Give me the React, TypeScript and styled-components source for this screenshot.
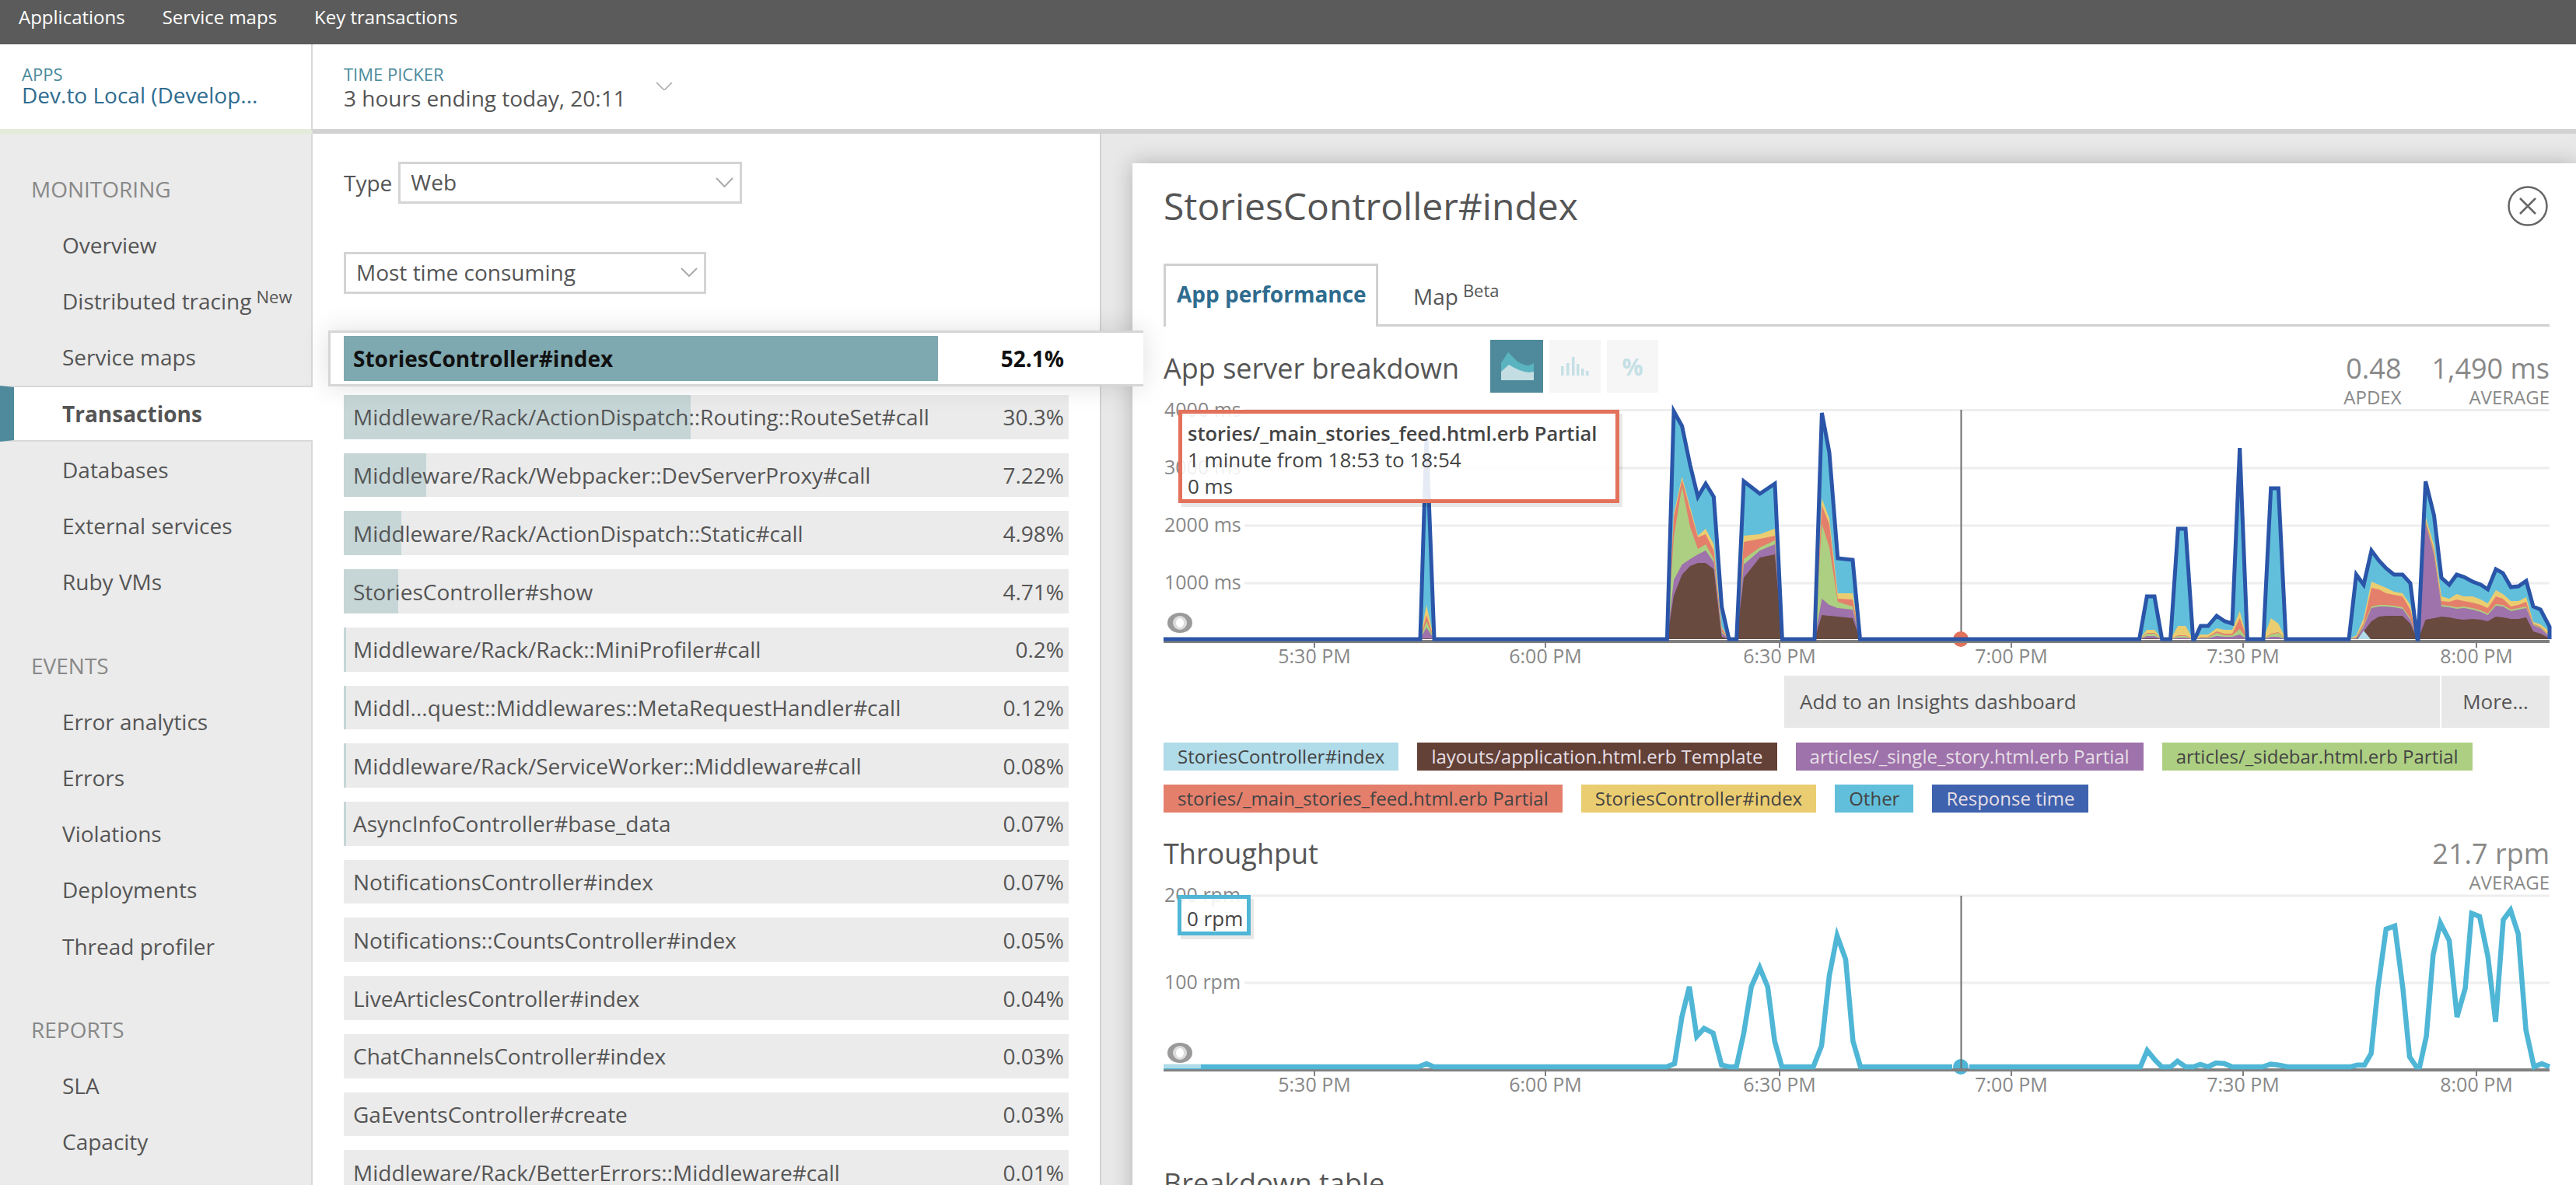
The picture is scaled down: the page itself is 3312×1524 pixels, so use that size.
import React from "react";
import styled, { createGlobalStyle } from "styled-components";

const GlobalStyle = createGlobalStyle`
  html, body {
    margin: 0;
    width: 3312px;
    height: 1524px;
    overflow: hidden;
    background: #fff;
    font-family: "Open Sans", "Liberation Sans", sans-serif;
    color: #555;
  }
  * {
    box-sizing: border-box;
  }
`;

const Page = styled.div`
  width: 3312px;
  height: 1524px;
  display: flex;
  flex-direction: column;
  overflow: hidden;
`;

const TopBar = styled.div`
  height: 57px;
  flex: none;
  background: #5b5b5b;
  display: flex;
  gap: 48px;
  padding: 0 24px;
  font-size: 24px;
  line-height: 44px;
  color: #fff;
`;

const Header = styled.div`
  height: 115px;
  flex: none;
  display: flex;
  border-bottom: 6px solid #d2d2d2;
`;

const AppCell = styled.div`
  width: 402px;
  height: 115px;
  flex: none;
  padding: 24px 0 0 28px;
  border-right: 2px solid #d8d8d8;
  border-bottom: 6px solid #e3ecd9;
`;

const PickerCell = styled.div`
  padding: 24px 0 0 40px;
  display: flex;
  align-items: flex-start;
`;

const SmallLabel = styled.div`
  font-size: 22px;
  line-height: 28px;
  color: #4a8a9b;
`;

const AppName = styled.div`
  font-size: 28px;
  line-height: 34px;
  margin-top: -4px;
  color: #2f6c8f;
`;

const PickerValue = styled.div`
  font-size: 28px;
  line-height: 36px;
  margin-top: -1px;
  color: #555;
`;

const PickerChevron = styled.svg`
  margin: 25px 0 0 38px;
`;

const Body = styled.div`
  flex: 1;
  display: flex;
  min-height: 0;
`;

const Sidebar = styled.nav`
  width: 402px;
  flex: none;
  padding-top: 35px;
  background: #ebebeb;
  border-right: 2px solid #d8d8d8;
`;

const NavGroup = styled.div`
  margin-bottom: 35.5px;
`;

const NavHeading = styled.div`
  height: 72px;
  padding-left: 40px;
  font-size: 28px;
  line-height: 72px;
  color: #888;
`;

const NavItem = styled.div<{ $active?: boolean }>`
  height: 72.2px;
  padding-left: 80px;
  font-size: 28px;
  line-height: 72px;
  color: #555;
  sup {
    font-size: 22px;
    line-height: 0;
    vertical-align: 8px;
    margin-left: 6px;
  }
  ${(p) =>
    p.$active &&
    `
    position: relative;
    margin-right: -2px;
    background: #fff;
    border-top: 2px solid #d8d8d8;
    border-bottom: 2px solid #d8d8d8;
    border-left: 18px solid #4e8a9b;
    padding-left: 62px;
    line-height: 68px;
    font-weight: 700;
  `}
`;

const ListColumn = styled.div`
  width: 1014px;
  flex: none;
  padding: 36px 0 0 40px;
  border-right: 2px solid #d2d2d2;
  background: #fff;
  position: relative;
  z-index: 2;
`;

const TypeRow = styled.div`
  display: flex;
  align-items: center;
  gap: 8px;
  font-size: 28px;
  margin-bottom: 62px;
`;

const Select = styled.div<{ $w: number }>`
  width: ${(p) => p.$w}px;
  height: 54px;
  display: flex;
  align-items: center;
  justify-content: space-between;
  padding: 0 8px 2px 13px;
  border: 3px solid #d4d4d4;
  font-size: 28px;
  color: #555;
  background: #fff;
`;

const SelectedWrap = styled.div`
  margin: 47px -56px 11px -20px;
  height: 72px;
  padding: 4px 0 4px 17px;
  display: flex;
  background: #fff;
  border: 3px solid #d6d6d6;
  border-right: none;
  box-shadow: 0 0 34px rgba(0, 0, 0, 0.13);
  position: relative;
  z-index: 3;
`;

const RowList = styled.div`
  width: 932px;
  display: flex;
  flex-direction: column;
  gap: 18px;
`;

const Row = styled.div<{ $fill: number; $selected?: boolean }>`
  width: 932px;
  height: ${(p) => (p.$selected ? 58 : 56.72)}px;
  flex: none;
  display: flex;
  align-items: center;
  justify-content: space-between;
  padding: 0 6px 0 12px;
  font-size: 28px;
  font-weight: ${(p) => (p.$selected ? 700 : 400)};
  color: ${(p) => (p.$selected ? "#111" : "#555")};
  white-space: nowrap;
  background: ${(p) =>
    p.$selected
      ? `linear-gradient(to right, #7fa9b0 ${p.$fill}px, #fff ${p.$fill}px)`
      : `linear-gradient(to right, #c6d6d7 ${p.$fill}px, #ebebeb ${p.$fill}px)`};
`;

const PanelArea = styled.div`
  flex: 1;
  min-width: 0;
  padding: 38px 0 0 40px;
  background: #e8e8e8;
`;

const Panel = styled.div`
  height: 1400px;
  padding: 25px 34px 0 40px;
  background: #fff;
  box-shadow: 0 0 26px rgba(0, 0, 0, 0.24);
`;

const PanelHead = styled.div`
  display: flex;
  justify-content: space-between;
  align-items: center;
  height: 60px;
`;

const PanelTitle = styled.h1`
  margin: 0;
  font-size: 48px;
  line-height: 60px;
  font-weight: 400;
  color: #555;
`;

const CloseIcon = styled.svg`
  margin-right: 2px;
`;

const Tabs = styled.div`
  margin-top: 44px;
  height: 81px;
  display: flex;
  border-bottom: 3px solid #d0d0d0;
`;

const Tab = styled.div<{ $active?: boolean }>`
  height: 81px;
  font-size: 28px;
  ${(p) =>
    p.$active
      ? `
    width: 276px;
    padding: 16px 0 0 14px;
    line-height: 40px;
    font-weight: 700;
    color: #2f6c8f;
    background: #fff;
    border: 3px solid #d0d0d0;
    border-bottom: none;
  `
      : `
    padding: 22px 0 0 45px;
    line-height: 40px;
    color: #555;
    sup {
      font-size: 22px;
      line-height: 0;
      vertical-align: 10px;
      margin-left: 6px;
    }
  `}
`;

const SectionHead = styled.div<{ $top: number }>`
  margin-top: ${(p) => p.$top}px;
  height: 84px;
  display: flex;
  align-items: flex-start;
`;

const SectionTitle = styled.h2`
  margin: 0 40px 0 0;
  font-size: 36px;
  line-height: 74px;
  font-weight: 400;
  color: #555;
`;

const ViewButtons = styled.div`
  display: flex;
  gap: 8px;
`;

const ViewButton = styled.div<{ $active?: boolean }>`
  width: ${(p) => (p.$active ? 68 : 66)}px;
  height: 68px;
  display: flex;
  align-items: center;
  justify-content: center;
  background: ${(p) => (p.$active ? "#4e8a9b" : "#f6f6f6")};
  color: #c5e0e5;
  font-size: 30px;
  font-weight: 700;
`;

const Stats = styled.div`
  margin: 12px 0 0 auto;
  display: flex;
  gap: 39px;
`;

const Stat = styled.div`
  text-align: right;
  color: #888;
`;

const StatValue = styled.div`
  font-size: 36px;
  line-height: 50px;
`;

const StatLabel = styled.div`
  font-size: 24px;
  line-height: 32px;
  margin-top: -4px;
`;

const ChartWrap = styled.div<{ $h: number }>`
  position: relative;
  width: 1782px;
  height: ${(p) => p.$h}px;
`;

const ChartSvg = styled.svg`
  display: block;
  overflow: visible;
  font-family: "Open Sans", "Liberation Sans", sans-serif;
  font-size: 25px;
  text {
    fill: #888;
  }
`;

const Tip = styled.div<{ $color: string; $w: number; $h: number; $left: number }>`
  position: absolute;
  left: ${(p) => p.$left}px;
  top: 6px;
  width: ${(p) => p.$w}px;
  height: ${(p) => p.$h}px;
  padding: 8px 7px;
  border: 5px solid ${(p) => p.$color};
  background: rgba(255, 255, 255, 0.88);
  box-shadow: 4px 5px 0 rgba(0, 0, 0, 0.09);
  font-size: 26px;
  line-height: 34px;
  color: #444;
  white-space: nowrap;
  b {
    font-weight: 600;
    font-size: 25.5px;
  }
`;

const ActionBar = styled.div`
  margin-left: 798px;
  height: 67px;
  display: flex;
  gap: 2px;
  font-size: 26px;
  line-height: 67px;
  color: #555;
`;

const ActionMain = styled.div`
  flex: 1;
  padding-left: 20px;
  background: #e8e8e8;
`;

const ActionMore = styled.div`
  width: 139px;
  text-align: center;
  background: #e8e8e8;
`;

const Legend = styled.div`
  margin-top: 19px;
  display: flex;
  flex-wrap: wrap;
  gap: 18px 24px;
`;

const Chip = styled.div<{ $bg: string; $light?: boolean }>`
  height: 36px;
  padding: 0 18px;
  font-size: 24px;
  line-height: 35px;
  white-space: nowrap;
  background: ${(p) => p.$bg};
  color: ${(p) => (p.$light ? "#e6dfe6" : "#444")};
`;

const TableTitle = styled.h2`
  margin: 76px 0 0;
  font-size: 36px;
  line-height: 50px;
  font-weight: 400;
  color: #555;
`;

// shape of the stacked chart, in page pixels
const colors = {
  total: "#62bfdb",
  yellow: "#ebcd71",
  red: "#e47f6c",
  green: "#adcf82",
  purple: "#9e72aa",
  brown: "#684a3e",
};
type Layer = keyof typeof colors;
const layerOrder: Layer[] = ["total", "yellow", "red", "green", "purple", "brown"];

interface Segment extends Record<Layer, number[]> {
  from: number;
  to: number;
  xs: number[];
}

const seg = (
  from: number,
  to: number,
  xs: number[],
  total: number[],
  yellow: number[],
  red: number[],
  green: number[],
  purple: number[],
  brown: number[],
): Segment => ({ from, to, xs, total, yellow, red, green, purple, brown });

const BASE = 821;

const segments: Segment[] = [
  seg(1826, 1844, [1834], [560], [777], [790], [798], [806], [820]),
  seg(
    2143.4,
    2223,
    [2152, 2162.6, 2173, 2183, 2193, 2203.4, 2213.6],
    [528, 547, 597, 638, 621, 638, 779],
    [660, 612, 651, 688, 679, 699, 805],
    [664, 616, 655, 690, 686, 707, 807],
    [690, 625, 677, 705, 699, 718, 811],
    [745, 725, 718, 712, 707, 722, 813],
    [765, 738, 727, 723, 723, 731, 818],
  ),
  seg(
    2232.7,
    2291.4,
    [2242, 2262.7, 2282],
    [618, 634, 621],
    [688, 686, 679],
    [696, 692, 688],
    [718, 703, 694],
    [725, 707, 699],
    [742, 716, 712],
  ),
  seg(
    2333,
    2391.5,
    [2342.4, 2352, 2362.8, 2382],
    [530, 581, 717, 719],
    [640, 666, 762, 762],
    [649, 673, 769, 770],
    [673, 703, 773, 779],
    [769, 777, 781, 783],
    [790, 791, 792, 794],
  ),
  seg(2750.6, 2779.7, [2760.3, 2770], [766, 766], [809, 809], [813, 813], [814, 814], [817, 817], [820, 820]),
  seg(2790.6, 2819.7, [2800.3, 2810], [679, 679], [804, 804], [816, 816], [817, 817], [819, 819], [821, 821]),
  seg(
    2821.6,
    2889.4,
    [2829.4, 2839, 2850, 2860.4, 2870, 2879.7],
    [804, 804, 791, 798, 801, 575],
    [815, 815, 807, 809, 809, 785],
    [818, 818, 811, 814, 814, 794],
    [819, 819, 813, 816, 816, 808],
    [820, 820, 817, 818, 818, 815],
    [821, 821, 821, 821, 821, 821],
  ),
  seg(2910, 2939, [2919.7, 2929.4], [627, 627], [794, 801], [814, 812], [815, 813], [818, 818], [821, 821]),
  seg(
    3020,
    3108,
    [3029.5, 3039, 3049, 3058.6, 3068, 3078, 3089, 3099],
    [738, 751, 707, 720, 730, 738, 738, 749],
    [816, 794, 747, 751, 755, 760, 762, 777],
    [818, 800, 755, 757, 762, 764, 766, 783],
    [819, 803, 779, 777, 777, 778, 780, 794],
    [820, 805, 781, 779, 779, 780, 782, 796],
    [821, 811, 798, 792, 791, 791, 791, 801],
  ),
  seg(
    3109,
    3278,
    [3118.6, 3129.5, 3139, 3149, 3158.6, 3168, 3179, 3189.6, 3198.6, 3209, 3218, 3228.3, 3238, 3248, 3257, 3266.4, 3278],
    [618, 662, 742, 751, 738, 741, 747, 751, 757, 731, 736, 754, 753, 746, 779, 783, 805],
    [664, 700, 766, 769, 763, 766, 766, 770, 775, 758, 763, 772, 772, 767, 799, 802, 811],
    [668, 707, 772, 773, 770, 772, 774, 777, 781, 766, 769, 779, 777, 773, 801, 805, 816],
    [670, 711, 777, 778, 780, 779, 781, 784, 788, 776, 777, 783, 781, 779, 802, 806, 817],
    [672, 713, 779, 780, 782, 781, 783, 786, 790, 778, 779, 785, 783, 781, 803, 807, 818],
    [796, 794, 792, 793, 795, 796, 795, 796, 798, 792, 793, 795, 795, 793, 811, 814, 820],
  ),
];

const areaPoints = (s: Segment, layer: Layer) =>
  [`${s.from},${BASE}`, ...s.xs.map((x, i) => `${x},${s[layer][i]}`), `${s.to},${BASE}`].join(" ");

const responseLine = [
  `1496,${BASE}`,
  ...segments.flatMap((s) => [
    `${s.from},${BASE}`,
    ...s.xs.map((x, i) => `${x},${s.total[i]}`),
    `${s.to},${BASE}`,
  ]),
].join(" ");

const throughputLine =
  "1496,1371 1824,1371 1834,1367 1843.5,1371 2143,1371 2153,1367 2162.4,1307 2172,1268 2181.5,1332 2191,1321.5 " +
  "2202.6,1327.6 2213.4,1368.7 2223,1371 2232.5,1371 2242,1327.6 2251.7,1268 2262.5,1243.5 2272.7,1268 2281.7,1338 " +
  "2291,1371 2331.4,1371 2342,1344 2352,1253.7 2362,1202.4 2373,1233 2382.4,1338 2392,1371 2510,1371 M2532,1371 2752,1371 2760.7,1350 " +
  "2771,1362.5 2779.3,1371 2791,1371 2799.6,1363.8 2810,1371 2820,1371 2829,1368 2839,1371 2849,1366 2859.6,1366.7 " +
  "2870,1371 2883,1371 2894.5,1371 2909,1371 2919.5,1367.5 2929.4,1368.7 2941,1371 3022.5,1371 3031,1368.7 3040,1368.7 " +
  "3048.6,1354 3057.3,1270 3067.8,1194 3079,1190 3089.4,1270 3098,1358 3106.8,1371 3111,1371 3119.6,1331.8 3128.3,1227 " +
  "3137.6,1186 3149,1208.5 3159,1307 3169.6,1270 3177.8,1173.6 3188,1177.7 3198.7,1229 3208.6,1313 3218.5,1182 " +
  "3227.8,1169.5 3237.7,1200 3247.6,1323.5 3258,1371 3268,1367 3278,1371";

const ticks = [
  { x: 1690, label: "5:30 PM" },
  { x: 1987, label: "6:00 PM" },
  { x: 2288, label: "6:30 PM" },
  { x: 2586, label: "7:00 PM" },
  { x: 2884, label: "7:30 PM" },
  { x: 3184, label: "8:00 PM" },
];

const Axis: React.FC<{ grid: { y: number; label: string }[]; base: number }> = ({ grid, base }) => (
  <>
    {grid.map((g) => (
      <g key={g.label}>
        <line x1={1600} x2={3278} y1={g.y} y2={g.y} stroke="#eeeeee" strokeWidth={3} />
        <text x={1497} y={g.y + 8}>
          {g.label}
        </text>
      </g>
    ))}
    {ticks.map((t) => (
      <g key={t.label}>
        <rect x={t.x - 1} y={base + 4} width={2} height={6} fill="#808080" />
        <text x={t.x} y={base + 30} textAnchor="middle">
          {t.label}
        </text>
      </g>
    ))}
  </>
);

const Ring: React.FC<{ cx: number; cy: number }> = ({ cx, cy }) => (
  <g>
    <ellipse cx={cx} cy={cy} rx={16} ry={13} fill="#9a9a9a" />
    <ellipse cx={cx} cy={cy} rx={9} ry={9} fill="#dcdcdc" />
    <ellipse cx={cx} cy={cy} rx={5} ry={6} fill="#fff" />
  </g>
);

const Chevron: React.FC<{ w: number; h: number; color?: string }> = ({ w, h, color = "#aaa" }) => (
  <svg width={w} height={h} viewBox={`0 0 ${w} ${h}`}>
    <polyline points={`1,1 ${w / 2},${h - 1} ${w - 1},1`} fill="none" stroke={color} strokeWidth={2} />
  </svg>
);

const rows = [
  { name: "Middleware/Rack/ActionDispatch::Routing::RouteSet#call", pct: "30.3%", fill: 446 },
  { name: "Middleware/Rack/Webpacker::DevServerProxy#call", pct: "7.22%", fill: 106 },
  { name: "Middleware/Rack/ActionDispatch::Static#call", pct: "4.98%", fill: 74 },
  { name: "StoriesController#show", pct: "4.71%", fill: 70 },
  { name: "Middleware/Rack/Rack::MiniProfiler#call", pct: "0.2%", fill: 3 },
  { name: "Middl...quest::Middlewares::MetaRequestHandler#call", pct: "0.12%", fill: 3 },
  { name: "Middleware/Rack/ServiceWorker::Middleware#call", pct: "0.08%", fill: 3 },
  { name: "AsyncInfoController#base_data", pct: "0.07%", fill: 3 },
  { name: "NotificationsController#index", pct: "0.07%", fill: 0 },
  { name: "Notifications::CountsController#index", pct: "0.05%", fill: 0 },
  { name: "LiveArticlesController#index", pct: "0.04%", fill: 0 },
  { name: "ChatChannelsController#index", pct: "0.03%", fill: 0 },
  { name: "GaEventsController#create", pct: "0.03%", fill: 0 },
  { name: "Middleware/Rack/BetterErrors::Middleware#call", pct: "0.01%", fill: 0 },
];

const legend = [
  { label: "StoriesController#index", bg: "#b0dbe9" },
  { label: "layouts/application.html.erb Template", bg: "#634136", light: true },
  { label: "articles/_single_story.html.erb Partial", bg: "#9e72aa", light: true },
  { label: "articles/_sidebar.html.erb Partial", bg: "#adcf82" },
  { label: "stories/_main_stories_feed.html.erb Partial", bg: "#e47f6c" },
  { label: "StoriesController#index", bg: "#ebcd71" },
  { label: "Other", bg: "#62bfdb" },
  { label: "Response time", bg: "#3f62ae", light: true },
];

const App: React.FC = () => (
  <Page>
    <GlobalStyle />
    <TopBar>
      <span>Applications</span>
      <span>Service maps</span>
      <span>Key transactions</span>
    </TopBar>
    <Header>
      <AppCell>
        <SmallLabel>APPS</SmallLabel>
        <AppName>Dev.to Local (Develop...</AppName>
      </AppCell>
      <PickerCell>
        <div>
          <SmallLabel>TIME PICKER</SmallLabel>
          <PickerValue>3 hours ending today, 20:11</PickerValue>
        </div>
        <PickerChevron width={22} height={10} viewBox="0 0 22 10">
          <polyline points="1,0 11,10 21,0" fill="none" stroke="#aaa" strokeWidth={1.6} />
        </PickerChevron>
      </PickerCell>
    </Header>
    <Body>
      <Sidebar>
        <NavGroup>
          <NavHeading>MONITORING</NavHeading>
          <NavItem>Overview</NavItem>
          <NavItem>
            Distributed tracing<sup>New</sup>
          </NavItem>
          <NavItem>Service maps</NavItem>
          <NavItem $active>Transactions</NavItem>
          <NavItem>Databases</NavItem>
          <NavItem>External services</NavItem>
          <NavItem>Ruby VMs</NavItem>
        </NavGroup>
        <NavGroup>
          <NavHeading>EVENTS</NavHeading>
          <NavItem>Error analytics</NavItem>
          <NavItem>Errors</NavItem>
          <NavItem>Violations</NavItem>
          <NavItem>Deployments</NavItem>
          <NavItem>Thread profiler</NavItem>
        </NavGroup>
        <NavGroup>
          <NavHeading>REPORTS</NavHeading>
          <NavItem>SLA</NavItem>
          <NavItem>Capacity</NavItem>
        </NavGroup>
      </Sidebar>
      <ListColumn>
        <TypeRow>
          <span>Type</span>
          <Select $w={442}>
            Web
            <Chevron w={23} h={13} />
          </Select>
        </TypeRow>
        <Select $w={466}>
          Most time consuming
          <Chevron w={22} h={12} />
        </Select>
        <SelectedWrap>
          <Row $selected $fill={764}>
            <span>StoriesController#index</span>
            <span>52.1%</span>
          </Row>
        </SelectedWrap>
        <RowList>
          {rows.map((r) => (
            <Row key={r.name} $fill={r.fill}>
              <span>{r.name}</span>
              <span>{r.pct}</span>
            </Row>
          ))}
        </RowList>
      </ListColumn>
      <PanelArea>
        <Panel>
          <PanelHead>
            <PanelTitle>StoriesController#index</PanelTitle>
            <CloseIcon width={52} height={52} viewBox="0 0 52 52">
              <circle cx={26} cy={26} r={24.5} fill="none" stroke="#666" strokeWidth={2.5} />
              <path d="M16 16 L36 36 M36 16 L16 36" stroke="#666" strokeWidth={2.5} fill="none" />
            </CloseIcon>
          </PanelHead>
          <Tabs>
            <Tab $active>App performance</Tab>
            <Tab>
              Map<sup>Beta</sup>
            </Tab>
          </Tabs>
          <SectionHead $top={17}>
            <SectionTitle>App server breakdown</SectionTitle>
            <ViewButtons>
              <ViewButton $active>
                <svg width={68} height={68} viewBox="0 0 68 68">
                  <path d="M14 30 L23 16 L34 27 Q42 33 50 33 L56 30 L56 52 L14 52 Z" fill="#5ab4c0" />
                  <path d="M14 41 L24 32 Q38 41 50 42 L56 41 L56 52 L14 52 Z" fill="#c3dde2" />
                </svg>
              </ViewButton>
              <ViewButton>
                <svg width={66} height={68} viewBox="0 0 66 68">
                  <path
                    d="M15 34h3.5v12H15z M22 30h3.5v16H22z M29 22h3.5v24H29z M35 31h3.5v15H35z M41 37h3.5v9H41z M47 40h3.5v6H47z"
                    fill="#c5e0e5"
                  />
                </svg>
              </ViewButton>
              <ViewButton>%</ViewButton>
            </ViewButtons>
            <Stats>
              <Stat>
                <StatValue>0.48</StatValue>
                <StatLabel>APDEX</StatLabel>
              </Stat>
              <Stat>
                <StatValue>1,490 ms</StatValue>
                <StatLabel>AVERAGE</StatLabel>
              </Stat>
            </Stats>
          </SectionHead>
          <ChartWrap $h={348}>
            <ChartSvg width={1782} height={348} viewBox="1496 520 1782 348">
              <Axis
                base={822}
                grid={[
                  { y: 526.5, label: "4000 ms" },
                  { y: 601, label: "3000 ms" },
                  { y: 675, label: "2000 ms" },
                  { y: 749, label: "1000 ms" },
                ]}
              />
              {segments.map((s) =>
                layerOrder.map((layer) => (
                  <polygon key={`${s.from}-${layer}`} points={areaPoints(s, layer)} fill={colors[layer]} />
                )),
              )}
              <polygon points="3031,821 3039,810 3048,821" fill="#b0dbe9" />
              <rect x={2520.5} y={526} width={2} height={296} fill="#6e6e6e" />
              <circle cx={2521} cy={821} r={10} fill="#e2725b" />
              <rect x={1496} y={822} width={1782} height={4} fill="#808080" />
              <polyline points={responseLine} fill="none" stroke="#2a55a8" strokeWidth={5} />
              <Ring cx={1517} cy={800} />
            </ChartSvg>
            <Tip $color="#e2725b" $w={567} $h={120} $left={19}>
              <b>stories/_main_stories_feed.html.erb Partial</b>
              <div>1 minute from 18:53 to 18:54</div>
              <div>0 ms</div>
            </Tip>
          </ChartWrap>
          <ActionBar>
            <ActionMain>Add to an Insights dashboard</ActionMain>
            <ActionMore>More...</ActionMore>
          </ActionBar>
          <Legend>
            {legend.map((l) => (
              <Chip key={l.label + l.bg} $bg={l.bg} $light={l.light}>
                {l.label}
              </Chip>
            ))}
          </Legend>
          <SectionHead $top={16}>
            <SectionTitle>Throughput</SectionTitle>
            <Stats>
              <Stat>
                <StatValue>21.7 rpm</StatValue>
                <StatLabel>AVERAGE</StatLabel>
              </Stat>
            </Stats>
          </SectionHead>
          <ChartWrap $h={276}>
            <ChartSvg width={1782} height={276} viewBox="1496 1144 1782 276">
              <Axis
                base={1373}
                grid={[
                  { y: 1151, label: "200 rpm" },
                  { y: 1263, label: "100 rpm" },
                ]}
              />
              <circle cx={2521} cy={1371} r={13} fill="#fff" />
              <circle cx={2521} cy={1371} r={10} fill="#4fb6d6" />
              <rect x={2520.5} y={1151} width={2} height={222} fill="#6e6e6e" />
              <rect x={1496} y={1373} width={1782} height={4} fill="#808080" />
              <path d={`M${throughputLine}`} fill="none" stroke="#4fb6d6" strokeWidth={6.5} />
              <rect x={1496} y={1368} width={48} height={5} fill="#b0dbe9" />
              <Ring cx={1517} cy={1353} />
            </ChartSvg>
            <Tip $color="#4fb6d6" $w={94} $h={52} $left={18}>
              <div>0 rpm</div>
            </Tip>
          </ChartWrap>
          <TableTitle>Breakdown table</TableTitle>
        </Panel>
      </PanelArea>
    </Body>
  </Page>
);

export default App;
